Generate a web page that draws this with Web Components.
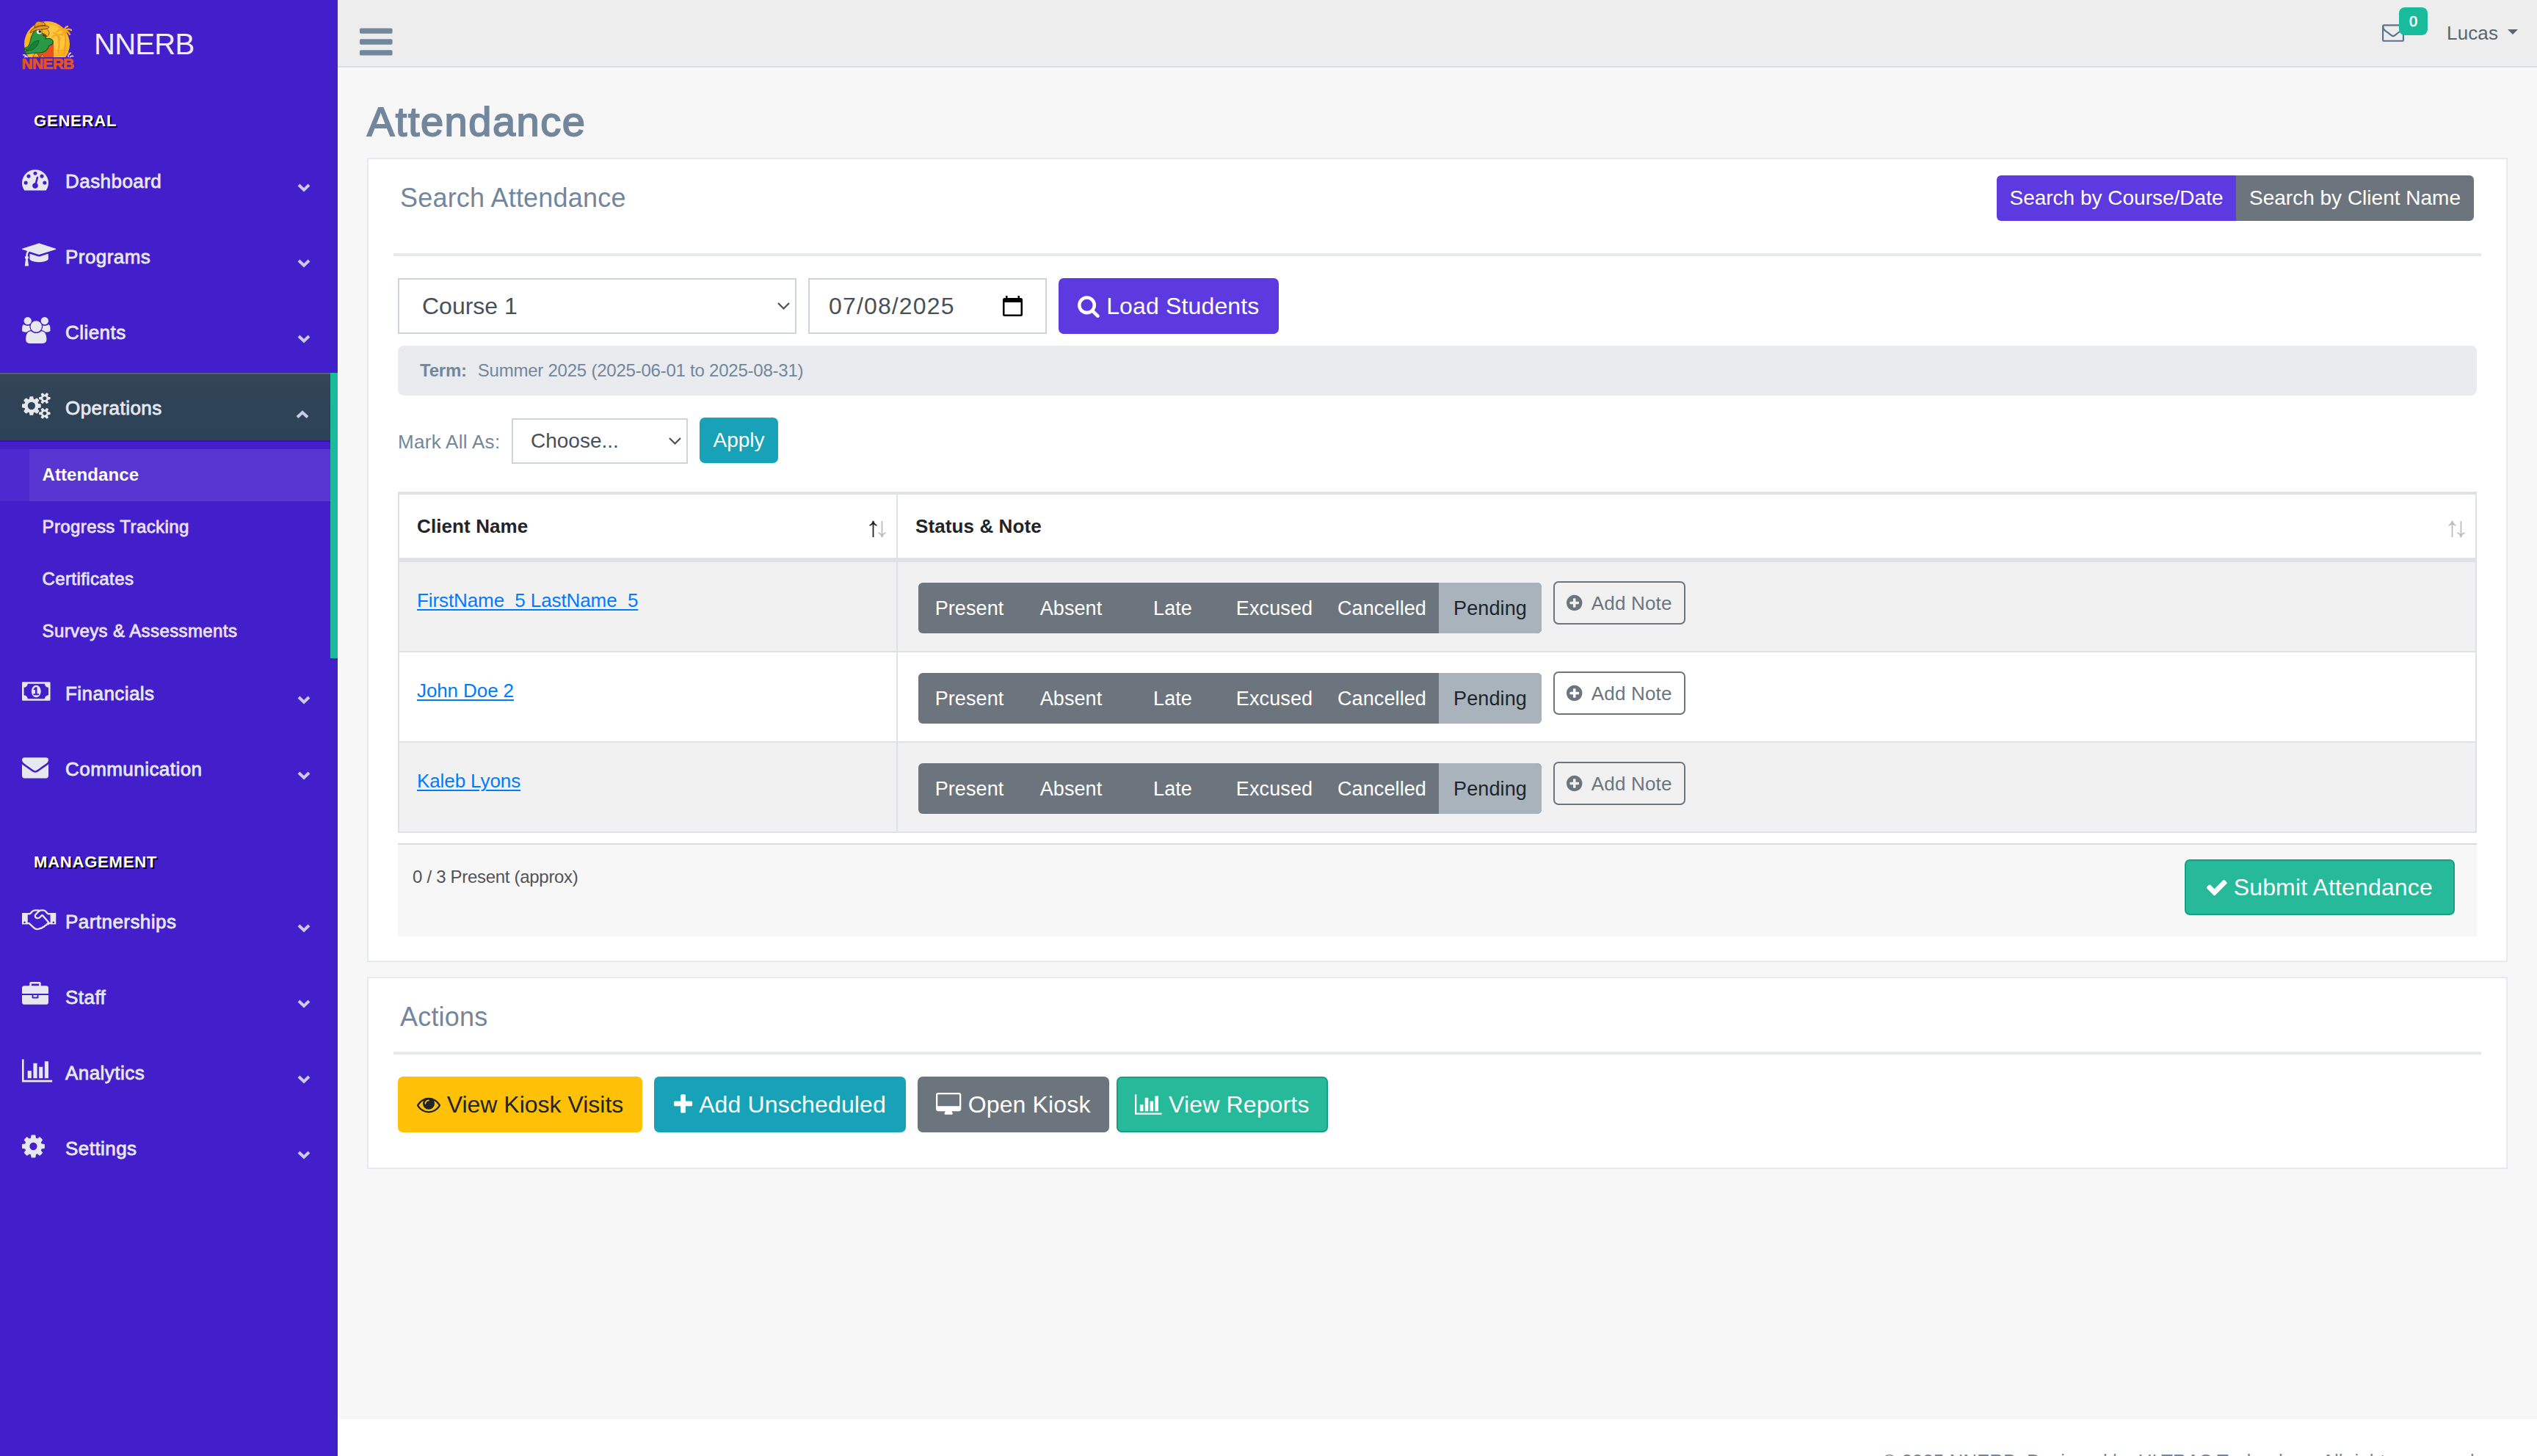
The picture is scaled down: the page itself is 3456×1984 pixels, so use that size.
<!DOCTYPE html>
<html lang="en">
<head>
<meta charset="utf-8">
<title>NNERB | Attendance</title>
<style>
html, body {
    margin: 0;
    padding: 0;
    height: 1984px;
    overflow: hidden;
    background: #431ecb;
    color: #73879c;
    font-family: "Liberation Sans", Arial, sans-serif;
    font-size: 26px;
    line-height: 38px;
}
</style>
</head>
<body>
<attendance-page></attendance-page>

<script>
// [viewBox x, viewBox width, markup], every glyph sits in a 1792 unit high cell
const ICONS = {
    bars: [0, 1536, '<rect y="256" width="1536" height="256" rx="64"/><rect y="768" width="1536" height="256" rx="64"/><rect y="1280" width="1536" height="256" rx="64"/>'],
    tachometer: [0, 1792, '<path d="M384 1152q0-53-37.5-90.5t-90.5-37.5-90.5 37.5-37.5 90.5 37.5 90.5 90.5 37.5 90.5-37.5 37.5-90.5zm192-448q0-53-37.5-90.5t-90.5-37.5-90.5 37.5-37.5 90.5 37.5 90.5 90.5 37.5 90.5-37.5 37.5-90.5zm428 481l101-382q6-26-7.5-48.5t-38.5-29.5-48 6.5-30 39.5l-101 382q-60 5-107 43.5t-63 98.5q-20 77 20 146t117 89 146-20 89-117q16-60-6-117t-72-91zm660-33q0-53-37.5-90.5t-90.5-37.5-90.5 37.5-37.5 90.5 37.5 90.5 90.5 37.5 90.5-37.5 37.5-90.5zm-640-640q0-53-37.5-90.5t-90.5-37.5-90.5 37.5-37.5 90.5 37.5 90.5 90.5 37.5 90.5-37.5 37.5-90.5zm448 192q0-53-37.5-90.5t-90.5-37.5-90.5 37.5-37.5 90.5 37.5 90.5 90.5 37.5 90.5-37.5 37.5-90.5zm320 448q0 261-141 483-19 29-54 29h-1402q-35 0-54-29-141-221-141-483 0-182 71-348t191-286 286-191 348-71 348 71 286 191 191 286 71 348z"/>'],
    graduation: [0, 2304, '<path d="M1774 836l18 316q4 69-82 128t-235 93.5-323 34.5-323-34.5-235-93.5-82-128l18-316 574 181q22 7 48 7t48-7zm530-324q0 23-22 31l-1120 352q-4 1-10 1t-10-1l-652-206q-43 34-71 111.5t-34 178.5q63 36 63 109 0 69-58 107l58 433q2 14-8 25-9 11-24 11h-192q-15 0-24-11-10-11-8-25l58-433q-58-38-58-107 0-73 65-111 11-207 98-330l-333-104q-22-8-22-31t22-31l1120-352q4-1 10-1t10 1l1120 352q22 8 22 31z"/>'],
    users: [0, 1920, '<path d="M593 896q-162 5-265 128h-134q-82 0-138-40.5t-56-118.5q0-353 124-353 6 0 43.5 21t97.5 42.5 119 21.5q67 0 133-23-5 37-5 66 0 139 81 256zm1071 637q0 120-73 189.5t-194 69.5h-874q-121 0-194-69.5t-73-189.5q0-53 3.5-103.5t14-109 26.5-108.5 43-97.5 62-81 85.5-53.5 111.5-20q10 0 43 21.5t73 48 107 48 135 21.5 135-21.5 107-48 73-48 43-21.5q61 0 111.5 20t85.5 53.5 62 81 43 97.5 26.5 108.5 14 109 3.5 103.5zm-1024-1277q0 106-75 181t-181 75-181-75-75-181 75-181 181-75 181 75 75 181zm704 384q0 159-112.5 271.5t-271.5 112.5-271.5-112.5-112.5-271.5 112.5-271.5 271.5-112.5 271.5 112.5 112.5 271.5zm576 225q0 78-56 118.5t-138 40.5h-134q-103-123-265-128 81-117 81-256 0-29-5-66 66 23 133 23 59 0 119-21.5t97.5-42.5 43.5-21q124 0 124 353zm-128-609q0 106-75 181t-181 75-181-75-75-181 75-181 181-75 181 75 75 181z"/>'],
    cogs: [0, 1920, '<path d="M896 896q0-106-75-181t-181-75-181 75-75 181 75 181 181 75 181-75 75-181zm768 512q0-52-38-90t-90-38-90 38-38 90q0 53 37.5 90.5t90.5 37.5 90.5-37.5 37.5-90.5zm0-1024q0-52-38-90t-90-38-90 38-38 90q0 53 37.5 90.5t90.5 37.5 90.5-37.5 37.5-90.5zm-384 421v185q0 10-7 19.5t-16 10.5l-155 24q-11 35-32 76 34 48 90 115 7 11 7 20 0 12-7 19-23 30-82.5 89.5t-78.5 59.5q-11 0-21-7l-115-90q-37 19-77 31-11 108-23 155-7 24-30 24h-186q-11 0-20-7.5t-10-17.5l-23-153q-34-10-75-31l-118 89q-7 7-20 7-11 0-21-8-144-133-144-160 0-9 7-19 10-14 41-53t47-61q-23-44-35-82l-152-24q-10-1-17-9.5t-7-19.5v-185q0-10 7-19.5t16-10.5l155-24q11-35 32-76-34-48-90-115-7-11-7-20 0-12 7-20 22-30 82-89t79-59q11 0 21 7l115 90q34-18 77-32 11-108 23-154 7-24 30-24h186q11 0 20 7.5t10 17.5l23 153q34 10 75 31l118-89q8-7 20-7 11 0 21 8 144 133 144 160 0 8-7 19-12 16-42 54t-45 60q23 48 34 82l152 23q10 2 17 10.5t7 19.5zm640 533v140q0 16-149 31-12 27-30 52 51 113 51 138 0 4-4 7-122 71-124 71-8 0-46-47t-52-68q-20 2-30 2t-30-2q-14 21-52 68t-46 47q-2 0-124-71-4-3-4-7 0-25 51-138-18-25-30-52-149-15-149-31v-140q0-16 149-31 13-29 30-52-51-113-51-138 0-4 4-7 4-2 35-20t59-34 30-16q8 0 46 46.5t52 67.5q20-2 30-2t30 2q51-71 92-112l6-2q4 0 124 70 4 3 4 7 0 25-51 138 17 23 30 52 149 15 149 31zm0-1024v140q0 16-149 31-12 27-30 52 51 113 51 138 0 4-4 7-122 71-124 71-8 0-46-47t-52-68q-20 2-30 2t-30-2q-14 21-52 68t-46 47q-2 0-124-71-4-3-4-7 0-25 51-138-18-25-30-52-149-15-149-31v-140q0-16 149-31 13-29 30-52-51-113-51-138 0-4 4-7 4-2 35-20t59-34 30-16q8 0 46 46.5t52 67.5q20-2 30-2t30 2q51-71 92-112l6-2q4 0 124 70 4 3 4 7 0 25-51 138 17 23 30 52 149 15 149 31z"/>'],
    money: [0, 1920, '<path d="M768 1152h384v-96h-128v-448h-114l-148 137 77 80q42-37 55-57h2v288h-128v96zm512-256q0 70-21 142t-59.5 134-101.5 101-138 39-138-39-101.5-101-59.5-134-21-142 21-142 59.5-134 101.5-101 138-39 138 39 101.5 101 59.5 134 21 142zm512 256v-512q-106 0-181-75t-75-181h-1152q0 106-75 181t-181 75v512q106 0 181 75t75 181h1152q0-106 75-181t181-75zm128-832v1152q0 26-19 45t-45 19h-1792q-26 0-45-19t-19-45v-1152q0-26 19-45t45-19h1792q26 0 45 19t19 45z"/>'],
    envelope: [0, 1792, '<path d="M1792 710v794q0 66-47 113t-113 47h-1472q-66 0-113-47t-47-113v-794q44 49 101 87 362 246 497 345 57 42 92.5 65.5t94.5 48 110 24.5h2q51 0 110-24.5t94.5-48 92.5-65.5q170-123 498-345 57-39 100-87zm0-294q0 79-49 151t-122 123q-376 261-468 325-10 7-42.5 31t-54 38.5-52 32.5-57.5 27-50 9h-2q-23 0-50-9t-57.5-27-52-32.5-54-38.5-42.5-31q-91-64-262-182.5t-205-142.5q-62-42-117-115.5t-55-136.5q0-78 41.5-130t118.5-52h1472q65 0 112.5 47t47.5 113z"/>'],
    mail: [0, 1792, '<g fill="none" stroke="currentColor" stroke-width="128" stroke-linejoin="round"><rect x="64" y="320" width="1664" height="1280" rx="96"/><path d="M70 400q0 240 200 385 250 170 400 295 140 120 226 120t226-120q150-125 400-295 200-145 200-385"/></g>'],
    handshake: [0, 2304, '<path fill-rule="evenodd" d="M0 448h384v768H0zM176 1024a62 62 0 1 0 .1 0z"/><path fill-rule="evenodd" d="M1920 448h384v768h-384zM2128 1024a62 62 0 1 0 .1 0z"/><g fill="none" stroke="currentColor" stroke-width="116" stroke-linejoin="round" stroke-linecap="round"><path d="M370 512h120q70 0 130-80l60-80q100-88 240-88h130q80 0 140 44"/><path d="M370 1152h110l290 270q130 130 260 130 110 0 200-60 100 10 180-80 100-10 150-110 80-10 120-80l60-70h190"/><path d="M1920 512h-120q-60-10-110-70l-80-90q-70-88-200-88h-110q-110 0-180 80l-210 230q-60 80 0 160 60 80 160 70 100 0 170-80l100-120h50l400 470q50 60-10 140"/></g>'],
    briefcase: [0, 1792, '<path d="M640 256h512v-128h-512v128zm1152 640v480q0 66-47 113t-113 47h-1472q-66 0-113-47t-47-113v-480h672v160q0 26 19 45t45 19h320q26 0 45-19t19-45v-160h672zm-768 0v128h-256v-128h256zm768-480v384h-1792v-384q0-66 47-113t113-47h352v-160q0-40 28-68t68-28h576q40 0 68 28t28 68v160h352q66 0 113 47t47 113z"/>'],
    chart: [0, 2048, '<path d="M640 896v512h-256v-512h256zm384-512v1024h-256v-1024h256zm1024 1152v128h-2048v-1536h128v1408h1920zm-640-896v768h-256v-768h256zm384-384v1152h-256v-1152h256z"/>'],
    cog: [128, 1536, '<path d="M1152 896q0-106-75-181t-181-75-181 75-75 181 75 181 181 75 181-75 75-181zm512-109v222q0 12-8 23t-20 13l-185 28q-19 54-39 91 35 50 107 138 10 12 10 25t-9 23q-27 37-99 108t-94 71q-12 0-26-9l-138-108q-44 23-91 38-16 136-29 186-7 28-36 28h-222q-14 0-24.5-8.5t-11.5-21.5l-28-184q-49-16-90-37l-141 107q-10 9-25 9-14 0-25-11-126-114-165-168-7-10-7-23 0-12 8-23 15-21 51-66.5t54-70.5q-27-50-41-99l-183-27q-13-2-21-12.5t-8-23.5v-222q0-12 8-23t19-13l186-28q14-46 39-92-40-57-107-138-10-12-10-24 0-10 9-23 26-36 98.5-107.5t94.5-71.5q13 0 26 10l138 107q44-23 91-38 16-136 29-186 7-28 36-28h222q14 0 24.5 8.500t11.500 21.500l28 184q49 16 90 37l142-107q9-9 24-9 13 0 25 10 129 119 165 170 7 8 7 22 0 12-8 23-15 21-51 66.5t-54 70.5q26 50 41 98l183 28q13 2 21 12.5t8 23.5z"/>'],
    search: [64, 1664, '<path d="M1216 832q0-185-131.5-316.5t-316.5-131.5-316.5 131.5-131.5 316.5 131.5 316.5 316.5 131.5 316.5-131.5 131.5-316.5zm512 832q0 52-38 90t-90 38q-54 0-90-38l-343-342q-179 124-399 124-143 0-273.5-55.5t-225-150-150-225-55.5-273.5 55.5-273.5 150-225 225-150 273.5-55.5 273.5 55.5 225 150 150 225 55.5 273.5q0 220-124 399l343 343q37 37 37 90z"/>'],
    eye: [0, 1792, '<path d="M1664 960q-152-236-381-353 61 104 61 225 0 185-131.5 316.5t-316.5 131.5-316.5-131.5-131.5-316.5q0-121 61-225-229 117-381 353 133 205 333.5 326.5t434.5 121.5 434.5-121.5 333.5-326.5zm-720-384q0-20-14-34t-34-14q-125 0-214.5 89.5t-89.5 214.5q0 20 14 34t34 14 34-14 14-34q0-86 61-147t147-61q20 0 34-14t14-34zm848 384q0 34-20 69-140 230-376.5 368.5t-499.5 138.5-499.5-139-376.5-368q-20-35-20-69t20-69q140-229 376.5-368t499.5-139 499.5 139 376.5 368q20 35 20 69z"/>'],
    plus: [192, 1408, '<path d="M1600 736v192q0 40-28 68t-68 28h-416v416q0 40-28 68t-68 28h-192q-40 0-68-28t-28-68v-416h-416q-40 0-68-28t-28-68v-192q0-40 28-68t68-28h416v-416q0-40 28-68t68-28h192q40 0 68 28t28 68v416h416q40 0 68 28t28 68z"/>'],
    desktop: [0, 1920, '<path d="M1792 992v-832q0-13-9.5-22.5t-22.5-9.5h-1600q-13 0-22.5 9.5t-9.5 22.5v832q0 13 9.5 22.5t22.5 9.5h1600q13 0 22.5-9.5t9.5-22.5zm128-832v1088q0 66-47 113t-113 47h-544q0 37 16 77.5t32 71 16 43.5q0 26-19 45t-45 19h-512q-26 0-45-19t-19-45q0-14 16-44t32-70 16-78h-544q-66 0-113-47t-47-113v-1088q0-66 47-113t113-47h1600q66 0 113 47t47 113z"/>'],
    check: [121, 1550, '<path d="M1671 566q0 40-28 68l-724 724-136 136q-28 28-68 28t-68-28l-136-136-362-362q-28-28-28-68t28-68l136-136q28-28 68-28t68 28l294 295 656-657q28-28 68-28t68 28l136 136q28 28 28 68z"/>'],
    plusCircle: [128, 1536, '<path d="M1344 960v-128q0-26-19-45t-45-19h-256v-256q0-26-19-45t-45-19h-128q-26 0-45 19t-19 45v256h-256q-26 0-45 19t-19 45v128q0 26 19 45t45 19h256v256q0 26 19 45t45 19h128q26 0 45-19t19-45v-256h256q26 0 45-19t19-45zm320-64q0 209-103 385.5t-279.5 279.5-385.5 103-385.5-103-279.5-279.5-103-385.5 103-385.5 279.5-279.5 385.5-103 385.5 103 279.5 279.5 103 385.5z"/>']
};

function attach(el, html) {
    el.attachShadow({mode: 'open'}).innerHTML = html;
}

class FaIcon extends HTMLElement {
    connectedCallback() {
        const [x, w, body] = ICONS[this.getAttribute('name')];
        const size = Number(this.getAttribute('size') || 36);
        attach(this, `
<style>
:host { display: block; flex: none; }
svg { display: block; fill: currentColor; overflow: visible; }
</style>
<svg width="${(w * size / 1792).toFixed(2)}" height="${size}" viewBox="${x} 0 ${w} 1792">${body}</svg>`);
    }
}
customElements.define('fa-icon', FaIcon);

class BrandLogo extends HTMLElement {
    connectedCallback() {
        attach(this, `
<style>
:host { display: block; flex: none; width: 70px; height: 67px; }
svg { display: block; overflow: visible; }
text { font: bold 20px "Liberation Sans", Arial, sans-serif; }
</style>
<svg width="70" height="67" viewBox="0 0 70 67">
    <clipPath id="sun"><path d="M0 0h70v50H0z"/></clipPath>
    <g clip-path="url(#sun)">
        <circle cx="34" cy="32" r="31" fill="#fcb823"/>
        <circle cx="39" cy="26" r="20" fill="#fdc63f"/>
        <path d="M44 41h19M42 44h22M46 47h16" stroke="#f59e1b" stroke-width="1.2"/>
        <path d="M49 43q3-12 0-22M57 47q4-16 1-33" stroke="#f39a1c" stroke-width="1.6" fill="none"/>
        <path d="M49 21q-5-3-8 2M49 21q-3-5-7-4M49 21q3-4 7-1M49 21q3 1 3 6" stroke="#f6a623" stroke-width="2" fill="none"/>
    </g>
    <path d="M58 14q-6-4-10 1M58 14q-4-6-8-5M58 14q0-5 4-6M58 14q5-4 9-1M58 14q5 0 7 5M58 14q-3 2-3 6" stroke="#f5a81f" stroke-width="2.4" fill="none" stroke-linecap="round"/>
    <path d="M1 47q4-1 5 3M3 50q2-2 5 0M63 50q0-5 4-6M65 50q3-3 5-1" stroke="#e9e4fb" stroke-width="1.4" fill="none"/>
    <path d="M19 50V33l4-2 8 10V30q6-5 12-2v22z" fill="#e4541a"/>
    <path d="M15 50q1-6 5-6l4 6zM25 50l2-4 4 4z" fill="#f6a91c" stroke="#7c3d10" stroke-width=".8"/>
    <path d="M17 14q8-7 14-1 4 5 1 12 8-2 10 3 1 5-5 6-3 10-14 10-8 0-13 1-4 1-7-2l5-2-6-3q8-1 9-9 1-8 6-15z" fill="#279a43" stroke="#155a2a" stroke-width="1.2"/>
    <path d="M5 41q10 1 15-6 3-4 3-8-9 1-12 9z" fill="#1b7f39" stroke="#12592a" stroke-width=".8"/>
    <circle cx="23.5" cy="15" r="3.6" fill="#f3efd8"/>
    <circle cx="24.3" cy="15" r="1.7" fill="#221a12"/>
    <path d="M27 12q8-3 10 4 0 5-3 6-1-4-7-5z" fill="#fbb822" stroke="#8a4a10" stroke-width=".9"/>
    <path d="M28 18l5 3q-2 2-5 0z" fill="#7c2f12"/>
    <path d="M11 17q0-4 6-7 0-8 5-9 3 0 4 1 5-1 6 5 4 0 5 2-2 3-11 3-8 0-15 5z" fill="#e79a20" stroke="#7a4511" stroke-width="1"/>
    <path d="M17 10q7-4 15-3" stroke="#8b4d12" stroke-width="1.8" fill="none"/>
    <text x="-.5" y="65.500" textLength="71" lengthAdjust="spacingAndGlyphs" fill="#e4541a" stroke="#e4541a" stroke-width=".7">NNERB</text>
</svg>`);
    }
}
customElements.define('brand-logo', BrandLogo);

class NavItem extends HTMLElement {
    connectedCallback() {
        const open = this.hasAttribute('open');
        attach(this, `
<style>
:host { display: block; color: #e9e2f8; }
:host([open]) { border-right: 10px solid #1abb9c; height: 389px; }
a {
    display: flex;
    box-sizing: border-box;
    height: 92px;
    margin-bottom: 11px;
    padding: 0 37px 0 30px;
    color: #e7e7ee;
}
:host([open]) a {
    padding-right: 29px;
    background: linear-gradient(#334556, #2c4257);
    box-shadow: rgba(0, 0, 0, .25) 0 2px 0, inset rgba(255, 255, 255, .16) 0 2px 0;
}
fa-icon { width: 59px; margin-top: 26.5px; }
span {
    flex: 1;
    margin-top: 28.5px;
    -webkit-text-stroke: .8px currentColor;
    letter-spacing: .45px;
}
.chevron { width: 18px; height: 12px; margin-top: 50.5px; color: #c9cbec; }
.sub { padding-top: 1px; }
</style>
<a>
    <fa-icon name="${this.getAttribute('icon')}"></fa-icon>
    <span>${this.getAttribute('label')}</span>
    <svg class="chevron" viewBox="0 0 18 12"><path d="${open ? 'M2 9.5 9 3l7 6.5' : 'M2 2l7 6.8L16 2'}" fill="none" stroke="currentColor" stroke-width="4"/></svg>
</a>
${open ? '<div class="sub"><slot></slot></div>' : ''}`);
    }
}
customElements.define('nav-item', NavItem);

class NavLink extends HTMLElement {
    connectedCallback() {
        attach(this, `
<style>
:host {
    display: block;
    height: 71px;
    padding-left: 57.5px;
    font-size: 24px;
    line-height: 70px;
    color: #e9e2f8;
    -webkit-text-stroke: .8px currentColor;
    letter-spacing: .4px;
}
:host([current]) {
    font-weight: bold;
    color: #fff;
    -webkit-text-stroke: 0;
    letter-spacing: .1px;
    background: linear-gradient(to right, #4d2acd 40px, #5836d1 40px);
}
</style>
<slot></slot>`);
    }
}
customElements.define('nav-link', NavLink);

class SideBar extends HTMLElement {
    connectedCallback() {
        attach(this, `
<style>
:host { display: block; width: 460px; background: #431ecb; }
.brand {
    display: flex;
    align-items: center;
    height: 122px;
    padding-left: 30px;
    gap: 28px;
    font-size: 40px;
    letter-spacing: -.7px;
    color: #f0ecfb;
}
.brand span { margin-bottom: 2px; }
h3 {
    margin: 27px 0 18px 46px;
    font-size: 22px;
    line-height: 32px;
    letter-spacing: .8px;
    color: #fff;
    text-shadow: 2px 2px #000;
}
h3.second { margin-top: 67px; margin-bottom: 17px; }
</style>
<div class="brand"><brand-logo></brand-logo><span>NNERB</span></div>
<h3>GENERAL</h3>
<nav-item icon="tachometer" label="Dashboard"></nav-item>
<nav-item icon="graduation" label="Programs"></nav-item>
<nav-item icon="users" label="Clients"></nav-item>
<nav-item icon="cogs" label="Operations" open>
    <nav-link current>Attendance</nav-link>
    <nav-link>Progress Tracking</nav-link>
    <nav-link>Certificates</nav-link>
    <nav-link>Surveys &amp; Assessments</nav-link>
</nav-item>
<nav-item icon="money" label="Financials"></nav-item>
<nav-item icon="envelope" label="Communication"></nav-item>
<h3 class="second">MANAGEMENT</h3>
<nav-item icon="handshake" label="Partnerships"></nav-item>
<nav-item icon="briefcase" label="Staff"></nav-item>
<nav-item icon="chart" label="Analytics"></nav-item>
<nav-item icon="cog" label="Settings"></nav-item>`);
    }
}
customElements.define('side-bar', SideBar);

class TopBar extends HTMLElement {
    connectedCallback() {
        attach(this, `
<style>
:host {
    display: flex;
    flex: none;
    justify-content: space-between;
    box-sizing: border-box;
    height: 92px;
    padding: 0 26px 0 30px;
    background: #ededed;
    border-bottom: 2px solid #d9dee4;
}
.toggle { margin-top: 30.5px; }
.right { display: flex; align-items: flex-start; color: #5a6570; }
.mail { position: relative; width: 88px; color: #5a738e; padding-top: 29px; }
.badge {
    position: absolute;
    left: 23px;
    top: 10px;
    width: 39px;
    height: 38px;
    border-radius: 8px;
    background: #1abb9c;
    color: #fff;
    font-size: 20px;
    line-height: 38px;
    text-align: center;
    -webkit-text-stroke: .6px #fff;
}
.user { margin-top: 26px; letter-spacing: .1px; }
.caret {
    margin: 40px 0 0 13px;
    border: 7px solid transparent;
    border-top-color: currentColor;
    border-bottom: 0;
}
</style>
<fa-icon class="toggle" name="bars" size="52"></fa-icon>
<div class="right">
    <div class="mail"><fa-icon name="mail" size="30"></fa-icon><span class="badge">0</span></div>
    <span class="user">Lucas</span>
    <i class="caret"></i>
</div>`);
    }
}
customElements.define('top-bar', TopBar);

class PanelBox extends HTMLElement {
    connectedCallback() {
        attach(this, `
<style>
:host {
    display: block;
    box-sizing: border-box;
    padding: 0 34px;
    background: #fff;
    border: 2px solid #e6e9ed;
}
header {
    display: flex;
    justify-content: space-between;
    box-sizing: border-box;
    height: var(--head, 132px);
    padding: 22px 10px 0 9px;
    border-bottom: 4px solid #e6e9ed;
}
h2 { margin: 9px 0 0; font-size: 36px; line-height: 44px; font-weight: normal; letter-spacing: .2px; }
.body { padding: 30px 6px 0; }
</style>
<header><h2>${this.getAttribute('heading')}</h2><slot name="tools"></slot></header>
<div class="body"><slot></slot></div>`);
    }
}
customElements.define('panel-box', PanelBox);

class UiButton extends HTMLElement {
    connectedCallback() {
        const icon = this.getAttribute('icon');
        attach(this, `
<style>
:host {
    display: inline-flex;
    align-items: center;
    justify-content: center;
    flex: none;
    box-sizing: border-box;
    gap: 9px;
    height: 76px;
    border: 2px solid transparent;
    border-radius: 7px;
    background: var(--bg);
    background-clip: border-box;
    font-size: 32px;
    letter-spacing: .15px;
    color: #fff;
    white-space: nowrap;
}
:host([kind=primary]) { --bg: #5d39e0; }
:host([kind=info]) { --bg: #17a2b8; }
:host([kind=warning]) { --bg: #ffc107; color: #212529; letter-spacing: 0; }
:host([kind=secondary]) { --bg: #6c757d; }
:host([kind=success]) { --bg: #26b99a; border-color: #169f85; }
:host([kind=outline]) { border-color: #6c757d; color: #6c757d; font-size: 26px; height: 59px; gap: 12px; letter-spacing: .2px; }
:host([size=sm]) { height: 62px; font-size: 28px; letter-spacing: 0; }
</style>
${icon ? `<fa-icon name="${icon}" size="${this.getAttribute('icon-size') || 32}"></fa-icon>` : ''}<span><slot></slot></span>`);
        this.style.width = this.getAttribute('w') + 'px';
    }
}
customElements.define('ui-button', UiButton);

class SelectBox extends HTMLElement {
    connectedCallback() {
        attach(this, `
<style>
:host {
    display: flex;
    align-items: center;
    justify-content: space-between;
    flex: none;
    box-sizing: border-box;
    border: 2px solid #ced4da;
    background: #fff;
    color: #495057;
}
svg { flex: none; margin-bottom: 1px; }
</style>
<slot></slot>
<svg width="17" height="10" viewBox="0 0 17 10"><path d="M1 1l7.5 7.5L16 1" fill="none" stroke="#495057" stroke-width="2.2"/></svg>`);
    }
}
customElements.define('select-box', SelectBox);

class DateBox extends HTMLElement {
    connectedCallback() {
        attach(this, `
<style>
:host {
    display: flex;
    align-items: center;
    justify-content: space-between;
    box-sizing: border-box;
    width: 325px;
    height: 76px;
    padding: 0 31px 0 26px;
    border: 2px solid #ced4da;
    font-size: 32px;
    letter-spacing: 1.15px;
    color: #495057;
}
</style>
<slot></slot>
<svg width="27" height="28" viewBox="0 0 27 28"><path fill="#000" fill-rule="evenodd" d="M4 0h2.500v3h14V0H23v3h1.500Q27 3 27 5.500v20Q27 28 24.500 28h-22Q0 28 0 25.500v-20Q0 3 2.500 3H4zM2.500 9v16.500h22V9z"/></svg>`);
    }
}
customElements.define('date-box', DateBox);

const STATUSES = [['Present', 139], ['Absent', 138], ['Late', 139], ['Excused', 138], ['Cancelled', 155], ['Pending', 140]];

class ClientRow extends HTMLElement {
    connectedCallback() {
        const buttons = STATUSES.map(([label, w]) =>
            `<span class="${label === 'Pending' ? 'on' : ''}" style="width: ${w}px">${label}</span>`).join('');
        attach(this, `
<style>
:host {
    display: grid;
    grid-template-columns: 679px 1fr;
    box-sizing: border-box;
    height: 123px;
    border-bottom: 2px solid #dee2e6;
}
:host([striped]) { background: #f1f1f1; }
.name { padding: 33px 0 0 24px; border-right: 2px solid #dee2e6; }
a { color: #007bff; text-decoration: underline; text-decoration-thickness: 2px; text-underline-offset: 3px; letter-spacing: -.1px; }
.status { display: flex; align-items: flex-start; padding: 26px 0 0 28px; }
.group {
    display: flex;
    height: 69px;
    margin: 2px 16px 0 0;
    border-radius: 6px;
    overflow: hidden;
    background: #6c757d;
    color: #fff;
    font-size: 27px;
    line-height: 70px;
    text-align: center;
    letter-spacing: .1px;
}
.on { background: #a9b3bc; color: #212529; }
</style>
<div class="name"><a>${this.getAttribute('name')}</a></div>
<div class="status">
    <div class="group">${buttons}</div>
    <ui-button kind="outline" icon="plusCircle" icon-size="25" w="180">Add Note</ui-button>
</div>`);
    }
}
customElements.define('client-row', ClientRow);

class ClientTable extends HTMLElement {
    connectedCallback() {
        attach(this, `
<style>
:host {
    display: block;
    box-sizing: border-box;
    margin-top: 39px;
    border: 2px solid #dee2e6;
    border-top-width: 4px;
    border-bottom: 0;
}
.head {
    display: grid;
    grid-template-columns: 679px 1fr;
    height: 86px;
    border-bottom: 6px solid #dee2e6;
    font-weight: bold;
    color: #212529;
    line-height: 86px;
    letter-spacing: .1px;
}
.cell { display: flex; justify-content: space-between; align-items: center; padding: 0 14px 0 24px; }
.cell + .cell { padding: 0 14px 0 24px; }
.cell:first-child { border-right: 2px solid #dee2e6; }
svg { margin-top: 7px; }
</style>
<div class="head">
    <div class="cell">Client Name
        <svg width="24" height="24" viewBox="0 0 24 24" fill="none" stroke-width="1.8"><path d="M6.5 23V2M1.5 7q4-1 5-6 1 5 5 6" stroke="#212529"/><path d="M18.5 1v21M13.5 17q4 1 5 6 1-5 5-6" stroke="#bcbdbe"/></svg>
    </div>
    <div class="cell">Status &amp; Note
        <svg width="24" height="24" viewBox="0 0 24 24" fill="none" stroke-width="1.8" stroke="#bcbdbe"><path d="M6.5 23V2M1.5 7q4-1 5-6 1 5 5 6M18.5 1v21M13.5 17q4 1 5 6 1-5 5-6"/></svg>
    </div>
</div>
<slot></slot>`);
    }
}
customElements.define('client-table', ClientTable);

class AttendancePage extends HTMLElement {
    connectedCallback() {
        attach(this, `
<style>
:host { display: grid; grid-template-columns: 460px 1fr; height: 1984px; }
main { display: flex; flex-direction: column; min-width: 0; height: 1984px; background: #f7f7f7; }
.content { display: flow-root; flex: none; height: 1842px; padding: 0 40px; }
h1 {
    margin: 48px 0 23px;
    font-size: 56px;
    line-height: 52px;
    font-weight: normal;
    -webkit-text-stroke: 1.8px currentColor;
    letter-spacing: 1.5px;
}
.search { height: 1096px; }
.actions { --head: 104px; height: 262px; margin-top: 20px; }
.tabs { display: flex; }
.tabs ui-button:first-child { border-radius: 6px 0 0 6px; }
.tabs ui-button:last-child { border-radius: 0 6px 6px 0; }
.filters { display: flex; gap: 16px; }
.course { width: 543px; height: 76px; padding: 0 7px 0 31px; font-size: 32px; }
.term {
    height: 68px;
    margin-top: 16px;
    padding-left: 30px;
    border-radius: 8px;
    background: #e9ebef;
    font-size: 24px;
    line-height: 67px;
    letter-spacing: -.23px;
}
.term b { margin-right: 15px; }
.mark { display: flex; align-items: center; height: 62px; margin-top: 30px; }
.mark label { width: 155px; margin-top: 4px; letter-spacing: .3px; }
.choose { width: 240px; height: 62px; padding: 0 7px 0 24px; margin: 2px 16px 0 0; font-size: 28px; }
.summary {
    display: flex;
    justify-content: space-between;
    box-sizing: border-box;
    height: 127px;
    margin-top: 14px;
    padding: 20px 30px 0 20px;
    border-top: 2px solid #d9dbdd;
    background: #f7f7f7;
    font-size: 24px;
    color: #515356;
}
.summary span { margin-top: 5px; letter-spacing: -.3px; }
.buttons { display: flex; }
footer {
    flex: none;
    height: 50px;
    box-sizing: border-box;
    padding: 38px 78px 0 0;
    overflow: hidden;
    background: #fff;
    text-align: right;
}
</style>
<side-bar></side-bar>
<main>
    <top-bar></top-bar>
    <div class="content">
        <h1>Attendance</h1>
        <panel-box class="search" heading="Search Attendance">
            <div class="tabs" slot="tools">
                <ui-button kind="primary" size="sm" w="326">Search by Course/Date</ui-button>
                <ui-button kind="secondary" size="sm" w="324">Search by Client Name</ui-button>
            </div>
            <div class="filters">
                <select-box class="course">Course 1</select-box>
                <date-box>07/08/2025</date-box>
                <ui-button kind="primary" icon="search" w="300">Load Students</ui-button>
            </div>
            <div class="term"><b>Term:</b>Summer 2025 (2025-06-01 to 2025-08-31)</div>
            <div class="mark">
                <label>Mark All As:</label>
                <select-box class="choose">Choose...</select-box>
                <ui-button kind="info" size="sm" w="107">Apply</ui-button>
            </div>
            <client-table>
                <client-row name="FirstName_5 LastName_5" striped></client-row>
                <client-row name="John Doe 2"></client-row>
                <client-row name="Kaleb Lyons" striped></client-row>
            </client-table>
            <div class="summary">
                <span>0 / 3 Present (approx)</span>
                <ui-button kind="success" icon="check" w="368">Submit Attendance</ui-button>
            </div>
        </panel-box>
        <panel-box class="actions" heading="Actions">
            <div class="buttons">
                <ui-button kind="warning" icon="eye" w="333">View Kiosk Visits</ui-button>
                <ui-button kind="info" icon="plus" w="343" style="margin-left: 16px">Add Unscheduled</ui-button>
                <ui-button kind="secondary" icon="desktop" w="261" style="margin-left: 16px">Open Kiosk</ui-button>
                <ui-button kind="success" icon="chart" w="288" style="margin-left: 10px">View Reports</ui-button>
            </div>
        </panel-box>
    </div>
    <footer>© 2025 NNERB. Designed by ULTRAS Technology. All rights reserved.</footer>
</main>`);
    }
}
customElements.define('attendance-page', AttendancePage);
</script>
</body>
</html>
